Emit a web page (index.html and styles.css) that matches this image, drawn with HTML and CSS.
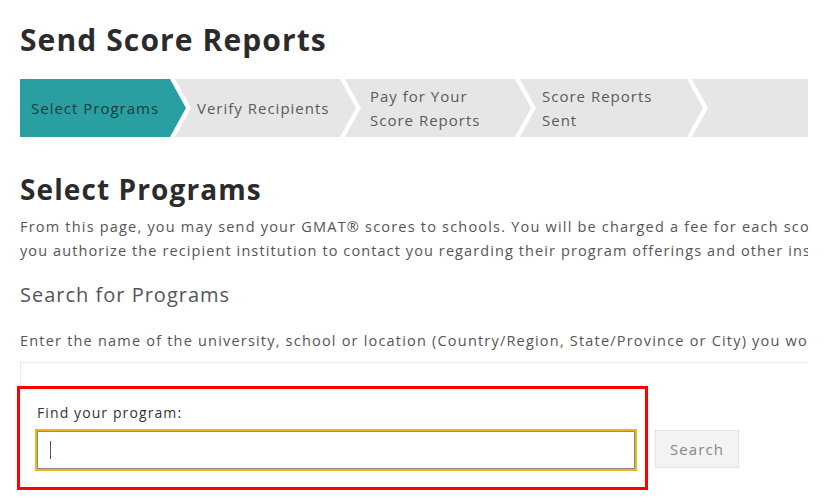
FILE: index.html
```html
<!DOCTYPE html>
<html lang="en">
<head>
<meta charset="utf-8">
<title>Send Score Reports</title>
<link rel="stylesheet" href="styles.css">
</head>
<body>
<div class="page">
  <h1 class="title">Send Score Reports</h1>
  <ol class="steps">
    <li class="step step-active step-first">Select Programs</li>
    <li class="step step-2">Verify Recipients</li>
    <li class="step step-3">Pay for Your<br>Score Reports</li>
    <li class="step step-4">Score Reports<br>Sent</li>
    <li class="step step-last"></li>
  </ol>
  <h2 class="section-title">Select Programs</h2>
  <div class="intro">
    <p class="intro-line">From this page, you may send your GMAT® scores to schools. You will be charged a fee for each score report you send. By sending your scores,</p>
    <p class="intro-line intro-line-tight">you authorize the recipient institution to contact you regarding their program offerings and other institutional information.</p>
  </div>
  <h3 class="sub-title">Search for Programs</h3>
  <p class="hint">Enter the name of the university, school or location (Country/Region, State/Province or City) you would like to search for.</p>
  <div class="results-box"></div>
  <div class="find-row">
    <div class="find-box">
      <label class="find-label">Find your program:</label>
      <div class="find-input"><span class="caret"></span></div>
    </div>
    <button class="search-btn" type="button">Search</button>
  </div>
</div>
</body>
</html>
```
FILE: styles.css
```css
html, body {
  margin: 0;
  padding: 0;
  background: #ffffff;
}
body {
  font-family: "Open Sans", "Liberation Sans", sans-serif;
  color: #444;
}
.page {
  width: 788px;
  padding: 0 20px;
}
.title {
  margin: 0;
  padding-top: 20px;
  font-size: 30px;
  line-height: 40px;
  font-weight: 700;
  color: #2b2b2b;
  letter-spacing: 1.1px;
}
.steps {
  list-style: none;
  margin: 19px 0 0 0;
  padding: 0;
  display: flex;
  height: 58px;
}
.step {
  flex: none;
  display: flex;
  align-items: center;
  box-sizing: border-box;
  background: #e6e6e6;
  color: #5a5a5a;
  font-size: 15px;
  line-height: 24px;
  letter-spacing: 1px;
  margin-left: -11px;
  padding-left: 22px;
  clip-path: polygon(0 0, calc(100% - 16px) 0, 100% 50%, calc(100% - 16px) 100%, 0 100%, 16px 50%);
}
.step-first {
  margin-left: 0;
  width: 166px;
  padding-left: 11px;
  clip-path: polygon(0 0, calc(100% - 16px) 0, 100% 50%, calc(100% - 16px) 100%, 0 100%);
}
.step-active {
  background: #2a9fa2;
  color: #1a3a3f;
}
.step-2 { width: 181px; }
.step-3 { width: 186px; padding-left: 25px; }
.step-4 { width: 183px; }
.step-last {
  flex: 1 1 auto;
  clip-path: polygon(0 0, 100% 0, 100% 100%, 0 100%, 16px 50%);
}
.section-title {
  margin: 34px 0 0 0;
  font-size: 28px;
  line-height: 36px;
  font-weight: 700;
  color: #2b2b2b;
  letter-spacing: 1.1px;
}
.intro {
  margin-top: 8px;
  overflow: hidden;
}
.intro-line {
  margin: 0;
  white-space: nowrap;
  font-size: 14.5px;
  line-height: 24px;
  letter-spacing: 1.2px;
  color: #555;
}
.intro-line-tight {
  letter-spacing: 1.1px;
}
.sub-title {
  margin: 17px 0 0 0;
  font-size: 20px;
  line-height: 30px;
  font-weight: 400;
  color: #555;
  letter-spacing: 1px;
}
.hint {
  margin: 19px 0 0 0;
  overflow: hidden;
  white-space: nowrap;
  font-size: 14.5px;
  line-height: 24px;
  letter-spacing: 1.2px;
  color: #555;
}
.results-box {
  margin-top: 9px;
  height: 23px;
  border-top: 1px dotted #ddd;
  border-left: 1px dotted #ddd;
}
.find-row {
  display: flex;
  align-items: flex-end;
  margin-left: -3px;
}
.find-box {
  box-sizing: border-box;
  width: 631px;
  border: 3px solid #ff0000;
  padding: 15px 10px 18px 17px;
  display: flex;
  flex-direction: column;
}
.find-label {
  font-size: 14px;
  line-height: 18px;
  letter-spacing: 1.1px;
  color: #333;
}
.find-input {
  margin-top: 9px;
  box-sizing: border-box;
  width: 598px;
  height: 38px;
  border: 1px solid #8a8a8a;
  box-shadow: 0 0 0 2px #efb521;
  background: #fff;
  display: flex;
  align-items: center;
  padding-left: 12px;
}
.caret {
  width: 1px;
  height: 18px;
  background: #555;
}
.search-btn {
  margin: 0 0 22px 7px;
  width: 84px;
  height: 38px;
  background: #f3f3f3;
  border: 1px dotted #d8d8d8;
  font-family: "Open Sans", "Liberation Sans", sans-serif;
  font-size: 15px;
  letter-spacing: 1.1px;
  color: #888;
  padding: 0;
}
```
